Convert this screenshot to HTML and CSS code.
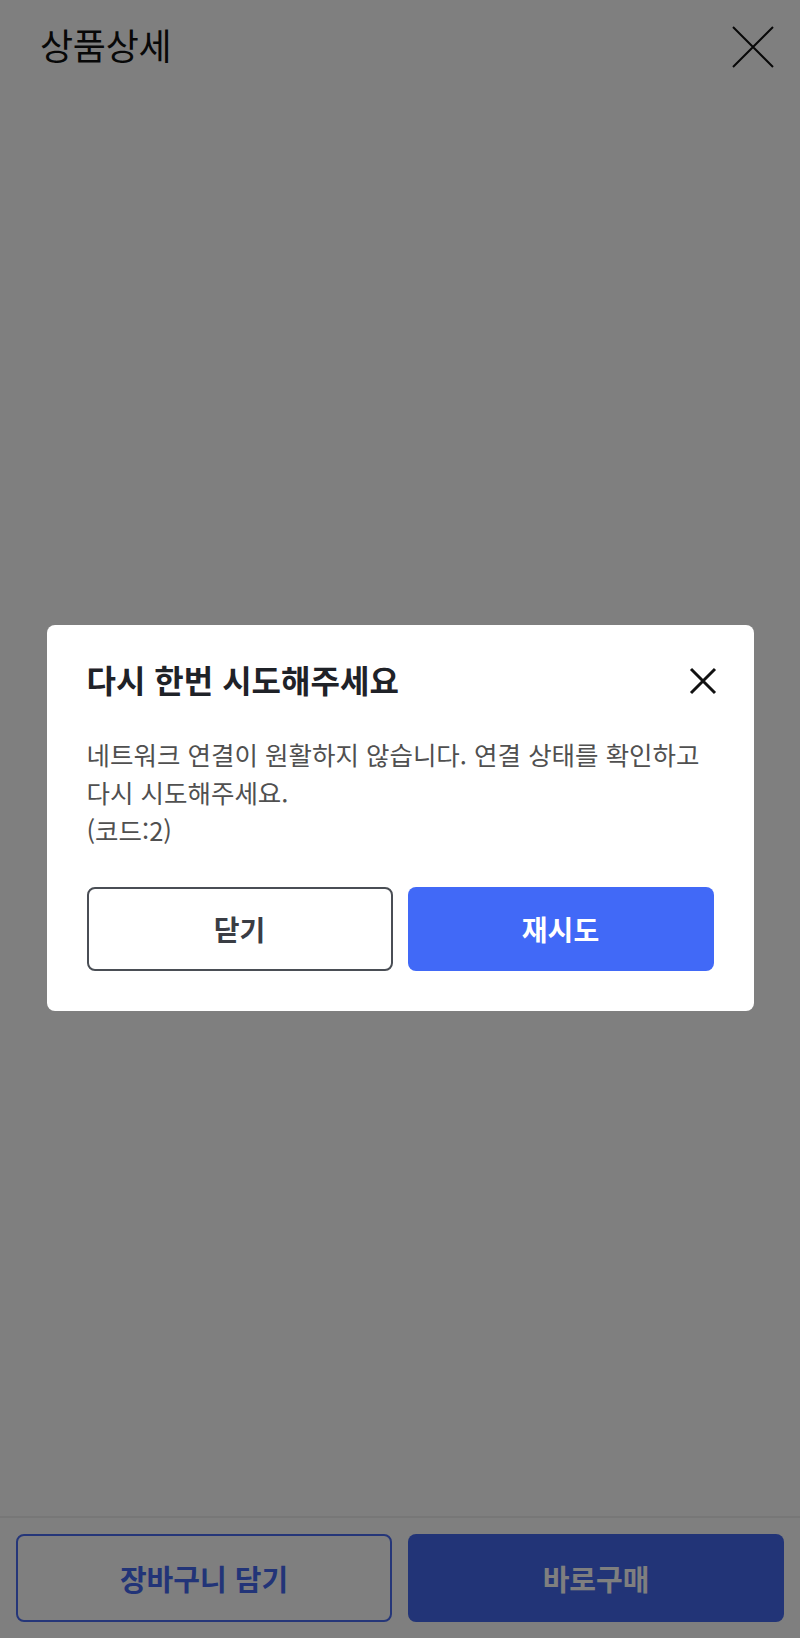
FILE: index.html
```html
<!DOCTYPE html>
<html lang="ko">
<head>
<meta charset="utf-8">
<link rel="stylesheet" href="styles.css">
</head>
<body>
<div class="page">
  <header class="header">
    <h1 class="header-title">상품상세</h1>
    <button class="header-close" aria-label="닫기">
      <svg width="42" height="42" viewBox="0 0 42 42"><path d="M1 1 L41 41 M41 1 L1 41" stroke="#111" stroke-width="2" fill="none"/></svg>
    </button>
  </header>
  <main class="content"></main>
  <footer class="bottom-bar">
    <button class="btn-cart">장바구니 담기</button>
    <button class="btn-buy">바로구매</button>
  </footer>
</div>
<div class="overlay">
  <div class="modal">
    <div class="modal-head">
      <h2 class="modal-title">다시 한번 시도해주세요</h2>
      <button class="modal-close" aria-label="닫기">
        <svg width="28" height="28" viewBox="0 0 28 28"><path d="M2 2 L26 26 M26 2 L2 26" stroke="#111" stroke-width="3" fill="none"/></svg>
      </button>
    </div>
    <p class="modal-body">네트워크 연결이 원활하지 않습니다. 연결 상태를 확인하고<br>다시 시도해주세요.<br>(코드:2)</p>
    <div class="modal-actions">
      <button class="btn-close">닫기</button>
      <button class="btn-retry">재시도</button>
    </div>
  </div>
</div>
</body>
</html>
```
FILE: styles.css
```css
* { box-sizing: border-box; }
html, body { margin: 0; padding: 0; }
body {
  width: 800px;
  height: 1638px;
  background: #fff;
  font-family: "Noto Sans CJK KR", "Noto Sans", sans-serif;
  overflow: hidden;
}
button { font-family: inherit; cursor: pointer; padding: 0; }
.page {
  height: 1638px;
  display: flex;
  flex-direction: column;
}
.header {
  height: 94px;
  display: flex;
  align-items: flex-start;
  justify-content: space-between;
  padding: 0 26px 0 40px;
}
.header-title {
  margin: 26px 0 0;
  font-size: 36px;
  font-weight: 400;
  color: #111;
  line-height: 36px;
  letter-spacing: -0.3px;
}
.header-close {
  margin-top: 26px;
  background: none;
  border: 0;
  width: 42px;
  height: 42px;
  display: flex;
}
.content { flex: 1; }
.bottom-bar {
  border-top: 2px solid #eeeeee;
  padding: 16px 16px 16px;
  display: grid;
  grid-template-columns: 1fr 1fr;
  gap: 16px;
}
.btn-cart, .btn-buy {
  height: 88px;
  border-radius: 8px;
  font-size: 29px;
  font-weight: 700;
}
.btn-cart {
  background: #fff;
  border: 2px solid #4a6cf2;
  color: #4569f0;
}
.btn-buy {
  background: #4569ef;
  border: 0;
  color: #fff;
}
.overlay {
  position: fixed;
  inset: 0;
  background: rgba(0, 0, 0, 0.5);
  display: flex;
  align-items: center;
  justify-content: center;
  padding-bottom: 2px;
}
.modal {
  width: 707px;
  background: #fff;
  border-radius: 8px;
  padding: 34px 40px 40px;
}
.modal-head {
  display: flex;
  align-items: center;
  justify-content: space-between;
}
.modal-title {
  margin: 0;
  font-size: 32px;
  line-height: 40px;
  font-weight: 700;
  color: #1f2228;
  letter-spacing: 0;
}
.modal-close {
  background: none;
  border: 0;
  width: 28px;
  height: 28px;
  margin-right: -3px;
  margin-top: 4px;
  display: flex;
}
.modal-body {
  margin: 36px 0 0;
  font-size: 25.5px;
  line-height: 38px;
  color: #505050;
}
.modal-actions {
  margin-top: 38px;
  display: grid;
  grid-template-columns: 1fr 1fr;
  gap: 15px;
}
.btn-close, .btn-retry {
  height: 84px;
  border-radius: 8px;
  font-size: 28px;
  font-weight: 700;
}
.btn-close {
  background: #fff;
  border: 2px solid #4a4e55;
  color: #3a3d44;
}
.btn-retry {
  background: #4169f7;
  border: 0;
  color: #fff;
}
```
